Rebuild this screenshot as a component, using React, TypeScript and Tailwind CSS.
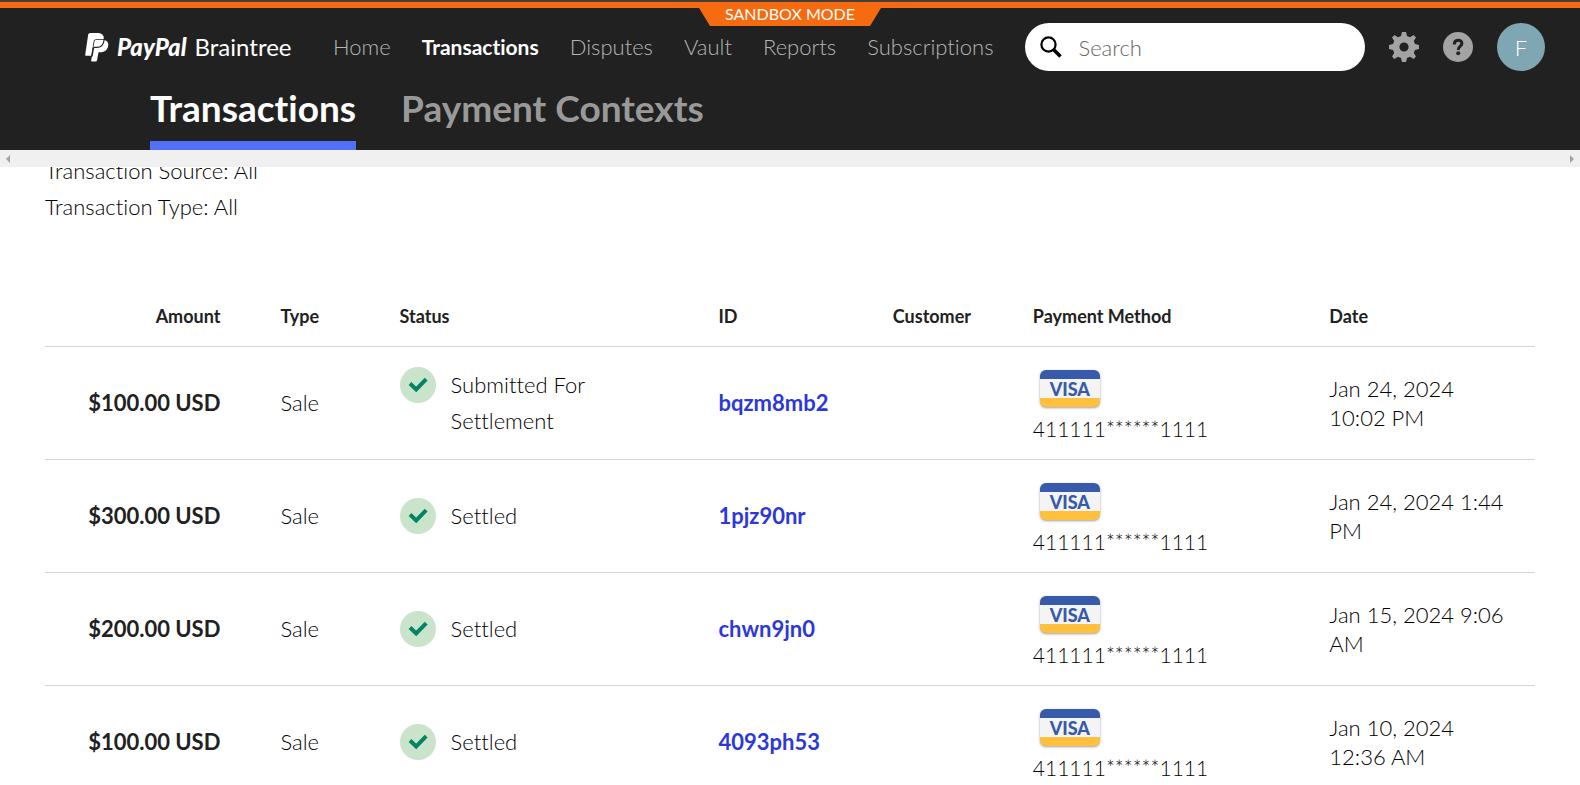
import React from 'react';

const navItems = ['Home', 'Transactions', 'Disputes', 'Vault', 'Reports', 'Subscriptions'];

const transactions = [
  { id: 'bqzm8mb2', amount: '$100.00 USD', status: 'Submitted For Settlement', date: 'Jan 24, 2024 10:02 PM' },
  { id: '1pjz90nr', amount: '$300.00 USD', status: 'Settled', date: 'Jan 24, 2024 1:44 PM' },
  { id: 'chwn9jn0', amount: '$200.00 USD', status: 'Settled', date: 'Jan 15, 2024 9:06 AM' },
  { id: '4093ph53', amount: '$100.00 USD', status: 'Settled', date: 'Jan 10, 2024 12:36 AM' },
];

const Logo = () => (
  <a href="#home" className="flex w-[210px] shrink-0 items-center text-2xl whitespace-nowrap text-white">
    <svg className="mr-2 shrink-0" width="24" height="29" viewBox="0 0 24 29" aria-hidden="true">
      <path d="M3.200 1.600Q3.500 0 5.200 0H12.500C17 0 19.300 2.400 18.700 6.200H11Q9 6.200 8.700 8L6.800 19 6.200 22.800H1Q0 22.800 .2 21.800Z" fill="#fff" />
      <path d="M9.500 8.200Q9.800 7 11 7H19.500C22.800 8 24 10.400 23 13.700 21.900 17.600 19 19.300 15 19.300H13.500L12 27.600Q11.800 28.600 10.800 28.600H6.800Q6 28.600 6.200 27.600Z" fill="#fff" />
      <path d="M19.200 6.500C18.600 12.500 15.800 14.400 11.700 14.400H9.800Q8.600 14.400 8.400 15.600L7 23.500" fill="none" stroke="#212121" strokeWidth="1.200" />
    </svg>
    <span className="font-black italic">PayPal</span>
    <span className="ml-2">Braintree</span>
  </a>
);

const SearchIcon = () => (
  <svg className="shrink-0" width="22" height="24" viewBox="0 0 22 24" fill="none" stroke="#000" aria-hidden="true">
    <circle cx="8.500" cy="9.500" r="7.100" strokeWidth="2.200" />
    <path d="M13 14L20.500 21.500" strokeWidth="3.600" />
  </svg>
);

const GearIcon = () => (
  <svg width="30" height="30" viewBox="0 0 30 30" fill="#a3a3a3" aria-hidden="true">
    <path
      fillRule="evenodd"
      d="M13 0h4l1 4 3 1.200L24.600 3 27 5.400 24.800 9 26 12l4 1v4l-4 1-1.200 3 2.200 3.600-2.400 2.400L21 24.800 18 26l-1 4h-4l-1-4-3-1.200L5.400 27 3 24.600 5.200 21 4 18l-4-1v-4l4-1 1.200-3L3 5.400 5.400 3 9 5.200 12 4zM15 10.400a4.600 4.600 0 1 0 0 9.200 4.600 4.600 0 0 0 0-9.200z"
    />
  </svg>
);

const HelpIcon = () => (
  <svg width="30" height="30" viewBox="0 0 30 30" aria-hidden="true">
    <circle cx="15" cy="15" r="15" fill="#a3a3a3" />
    <path d="M11.300 12.400C11.300 6.800 18.900 7.200 18.900 11.400 18.900 14.200 15.200 14.200 15.200 18" fill="none" stroke="#212121" strokeWidth="3" />
    <circle cx="15.200" cy="21.200" r="2" fill="#212121" />
  </svg>
);

const StatusIcon = () => (
  <svg className="shrink-0" width="36" height="36" viewBox="0 0 36 36" aria-hidden="true">
    <circle cx="18" cy="18" r="18" fill="#c9e4cb" />
    <path d="M10 16.500L16.200 22.500 26.200 12.200" fill="none" stroke="#038562" strokeWidth="4" />
  </svg>
);

const VisaCard = () => (
  <div
    aria-label="Visa"
    className="mx-[7px] flex h-[37px] w-[60px] items-center justify-center rounded-md border-t-9 border-b-9 border-t-[#375aab] border-b-[#ffc03e] bg-[#f4f4f4] text-lg leading-4 font-black text-[#375aab] shadow-sm shadow-black/30"
  >
    VISA
  </div>
);

const Header = () => (
  <header className="relative border-t-8 border-[#f76b10] bg-[#212121]">
    <div className="absolute inset-x-0 -top-2 h-[2px] bg-[#443f3c]" />
    <div className="absolute inset-x-0 top-0 flex justify-center">
      <div className="h-[18px] w-[182px] bg-[#f76b10] text-center text-base leading-3 text-white [clip-path:polygon(0_0,100%_0,171px_100%,11px_100%)]">
        SANDBOX MODE
      </div>
    </div>
    <div className="flex h-[78px] items-center pr-[35px] pl-[85px]">
      <Logo />
      <nav className="ml-[38px] flex gap-[31px] text-[22px] leading-8 font-light text-[#b5b5b5]">
        {navItems.map((item) => (
          <a key={item} href={`#${item.toLowerCase()}`} className={item === 'Transactions' ? 'text-[21px] font-bold text-white' : ''}>
            {item}
          </a>
        ))}
      </nav>
      <label className="ml-8 flex h-12 min-w-0 flex-1 items-center gap-4 rounded-full bg-white px-[15px]">
        <SearchIcon />
        <input
          type="search"
          aria-label="Search"
          placeholder="Search"
          className="min-w-0 flex-1 text-[22px] font-light outline-none placeholder:text-[#666]"
        />
      </label>
      <button type="button" aria-label="Settings" className="ml-6"><GearIcon /></button>
      <button type="button" aria-label="Help" className="ml-6"><HelpIcon /></button>
      <button type="button" className="ml-6 h-12 w-12 rounded-full bg-[#7ea6b3] text-[22px] font-light text-white">
        F
      </button>
    </div>
    <nav className="flex h-16 gap-[45px] pl-[150px] text-[37px] font-bold">
      <a href="#transactions" className="h-16 border-b-9 border-[#5070fa] leading-[44px] text-white">Transactions</a>
      <a href="#payment-contexts" className="leading-[44px] text-[#999]">Payment Contexts</a>
    </nav>
  </header>
);

const TransactionTable = () => (
  <table className="mt-[60px] w-full table-fixed text-left text-[22px]">
    <colgroup>
      <col className="w-[15.8%]" />
      <col className="w-[8%]" />
      <col className="w-[21.4%]" />
      <col className="w-[11.7%]" />
      <col className="w-[9.4%]" />
      <col className="w-[19.9%]" />
      <col />
    </colgroup>
    <thead>
      <tr className="h-[60px] border-b border-[#d4d4d4] text-lg text-[#212121]">
        <th className="pr-[60px] text-right font-bold">Amount</th>
        <th className="font-bold">Type</th>
        <th className="font-bold">Status</th>
        <th className="font-bold">ID</th>
        <th className="font-bold">Customer</th>
        <th className="font-bold">Payment Method</th>
        <th className="font-bold">Date</th>
      </tr>
    </thead>
    <tbody>
      {transactions.map((transaction) => (
        <tr key={transaction.id} className="h-[113px] border-b border-[#d4d4d4]">
          <td className="pr-[60px] text-right font-bold whitespace-nowrap text-[#212121]">{transaction.amount}</td>
          <td>Sale</td>
          <td>
            <div className="flex gap-[15px] pr-[110px] leading-9">
              <StatusIcon />
              <span>{transaction.status}</span>
            </div>
          </td>
          <td>
            <a href={`#${transaction.id}`} className="font-bold text-[#2c38d8]">{transaction.id}</a>
          </td>
          <td />
          <td className="pt-2 leading-[29px]">
            <VisaCard />
            <div className="mt-[7px] text-[21px]">411111******1111</div>
          </td>
          <td className="pr-7 leading-[29px]">{transaction.date}</td>
        </tr>
      ))}
    </tbody>
  </table>
);

const App = () => {
  return (
    <div className="flex h-screen flex-col overflow-hidden bg-white font-[Lato,sans-serif] text-black [font-variant-ligatures:none]">
      <Header />
      <div className="flex h-[17px] shrink-0 items-center justify-between bg-[#f0f0f0] px-[6px]">
        <svg width="4" height="8" viewBox="0 0 4 8" fill="#a3a3a3" aria-hidden="true"><path d="M4 0v8L0 4z" /></svg>
        <svg width="4" height="8" viewBox="0 0 4 8" fill="#a3a3a3" aria-hidden="true"><path d="M0 0v8l4-4z" /></svg>
      </div>
      <main className="min-h-0 flex-1 overflow-hidden px-[45px] font-light">
        <div className="-mt-[14px] pb-px text-[22px] leading-9">
          <p>Transaction Source: All</p>
          <p>Transaction Type: All</p>
        </div>
        <TransactionTable />
      </main>
    </div>
  );
};

export default App;
